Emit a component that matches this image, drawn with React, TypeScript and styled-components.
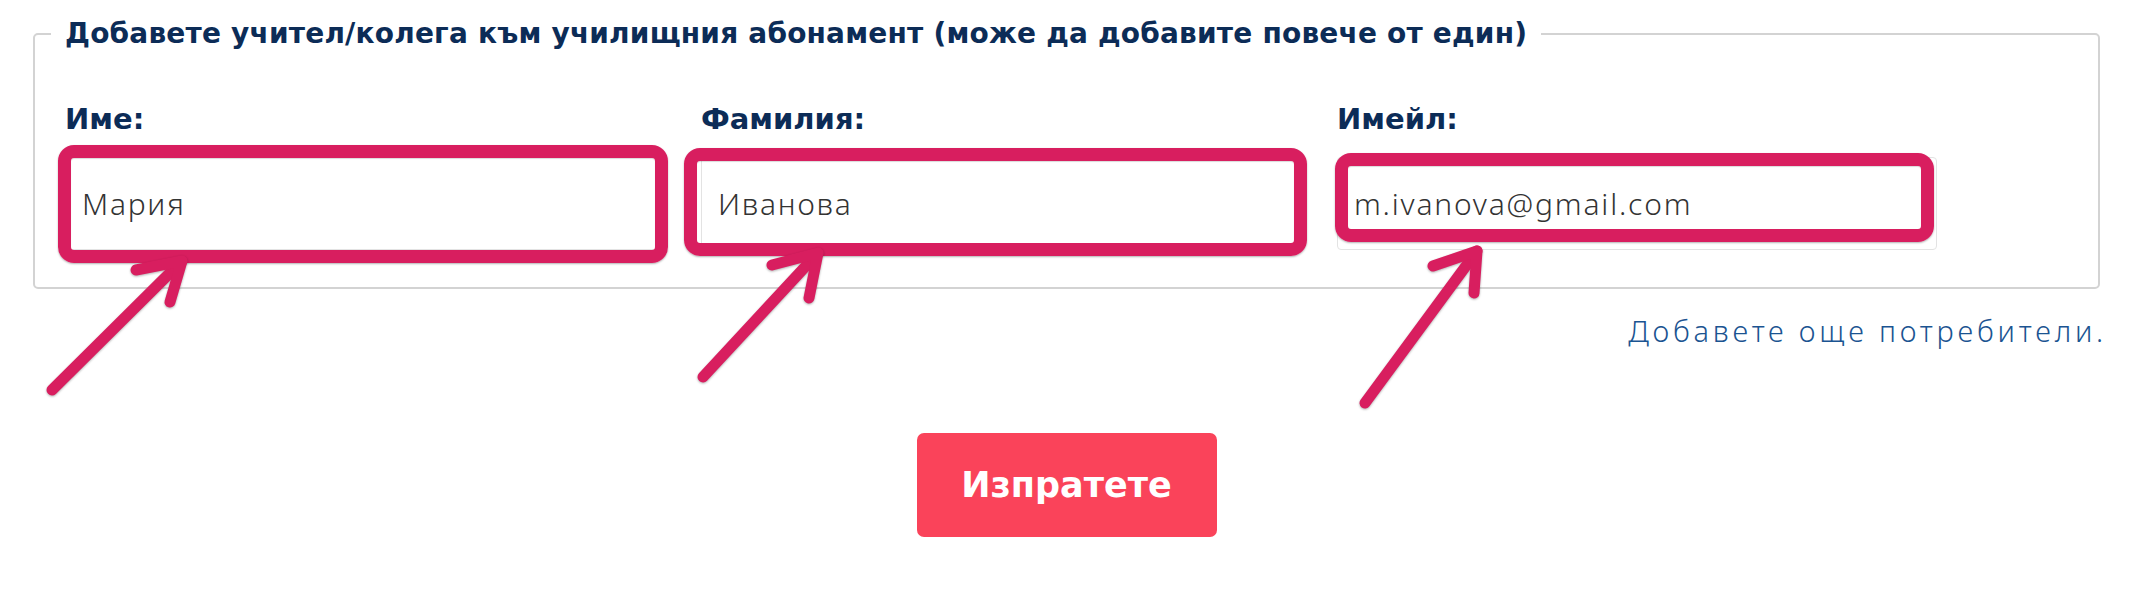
import styled, { createGlobalStyle } from "styled-components";

const GlobalStyle = createGlobalStyle`
  html, body {
    margin: 0;
    padding: 0;
    background: #ffffff;
  }
  body {
    font-family: "Noto Sans", "Open Sans", sans-serif;
  }
`;

type Offsets = { $l: number; $t: number; $r: number; $b: number };

const fields = [
  { label: "Име:", value: "Мария", mark: { $l: -7, $t: -12, $r: -3, $b: -13 } },
  { label: "Фамилия:", value: "Иванова", mark: { $l: -17, $t: -9, $r: -6, $b: -6 } },
  { label: "Имейл:", value: "m.ivanova@gmail.com", mark: { $l: -2, $t: -4, $r: 3, $b: 8 } },
];

// annotation arrows: tail, tip, two barb ends
const arrows = [
  { tail: [52, 390], tip: [182, 261], a: [136, 270], b: [170, 302] },
  { tail: [703, 377], tip: [818, 253], a: [772, 265], b: [809, 298] },
  { tail: [1365, 403], tip: [1477, 251], a: [1433, 266], b: [1474, 293] },
];

const App = () => {
  return (
    <Page lang="bg">
      <GlobalStyle />
      <Container>
        <Fieldset>
          <Legend>Добавете учител/колега към училищния абонамент (може да добавите повече от един)</Legend>
          <Fields>
            {fields.map((f) => (
              <Field key={f.label}>
                <Label>{f.label}</Label>
                <InputWrap>
                  <Input value={f.value} readOnly />
                  <Highlight {...f.mark} />
                </InputWrap>
              </Field>
            ))}
          </Fields>
        </Fieldset>
        <MoreRow>
          <MoreLink href="#">Добавете още потребители.</MoreLink>
        </MoreRow>
        <Actions>
          <Submit type="button">Изпратете</Submit>
        </Actions>
      </Container>
      <Arrows width="2155" height="610" viewBox="0 0 2155 610">
        {arrows.map((a, i) => (
          <g key={i}>
            <line x1={a.tail[0]} y1={a.tail[1]} x2={a.tip[0]} y2={a.tip[1]} />
            <polyline points={`${a.a[0]},${a.a[1]} ${a.tip[0]},${a.tip[1]} ${a.b[0]},${a.b[1]}`} />
          </g>
        ))}
      </Arrows>
    </Page>
  );
};

export default App;

const Page = styled.div`
  position: relative;
  width: 2155px;
  height: 610px;
  overflow: hidden;
  padding-top: 15px;
  box-sizing: border-box;
`;

const Container = styled.div`
  margin: 0 55px 0 33px;
`;

const Fieldset = styled.fieldset`
  margin: 0;
  min-width: 0;
  padding: 0 30px 37px 30px;
  border: 2px solid #d3d3d3;
  border-radius: 5px;
`;

const Legend = styled.legend`
  margin-left: -14px;
  padding: 0 14px;
  font-family: "DejaVu Sans", Verdana, sans-serif;
  font-size: 28px;
  font-weight: 700;
  line-height: 38px;
  letter-spacing: 0.2px;
  color: #0c2c57;
  white-space: nowrap;
`;

const Fields = styled.div`
  display: grid;
  grid-template-columns: repeat(3, 600px);
  column-gap: 36px;
  margin-top: 48px;
`;

const Field = styled.div`
  display: flex;
  flex-direction: column;
  gap: 20px;
`;

const Label = styled.div`
  font-family: "DejaVu Sans", Verdana, sans-serif;
  font-size: 29px;
  font-weight: 700;
  line-height: 36px;
  color: #0c2c57;
`;

const InputWrap = styled.div`
  position: relative;
  height: 93px;
`;

const Input = styled.input`
  box-sizing: border-box;
  width: 100%;
  height: 100%;
  padding: 0 16px;
  border: 1px solid #e3e3e3;
  border-radius: 4px;
  background: #ffffff;
  font-family: "Noto Sans", sans-serif;
  font-size: 30px;
  font-weight: 300;
  letter-spacing: 1.8px;
  color: #333333;
  outline: none;
`;

const Highlight = styled.div<Offsets>`
  position: absolute;
  left: ${(p) => p.$l}px;
  top: ${(p) => p.$t}px;
  right: ${(p) => p.$r}px;
  bottom: ${(p) => p.$b}px;
  border: 13px solid #d81e5f;
  border-radius: 16px;
  box-shadow: 0 1px 2px rgba(0, 0, 0, 0.3), inset 0 1px 1px rgba(0, 0, 0, 0.15);
  pointer-events: none;
`;

const MoreRow = styled.div`
  display: flex;
  justify-content: flex-end;
  margin: 24px -7px 0 0;
`;

const MoreLink = styled.a`
  font-size: 29px;
  font-weight: 300;
  line-height: 36px;
  letter-spacing: 3.8px;
  color: #1b5491;
  text-decoration: none;
`;

const Actions = styled.div`
  display: flex;
  justify-content: center;
  margin-top: 84px;
`;

const Submit = styled.button`
  width: 300px;
  height: 104px;
  border: none;
  border-radius: 7px;
  background: #fa435a;
  color: #ffffff;
  font-family: "DejaVu Sans", Verdana, sans-serif;
  font-size: 35px;
  font-weight: 700;
  cursor: pointer;
`;

const Arrows = styled.svg`
  position: absolute;
  left: 0;
  top: 0;
  pointer-events: none;
  filter: drop-shadow(0 1px 1px rgba(0, 0, 0, 0.3));

  line,
  polyline {
    fill: none;
    stroke: #d81e5f;
    stroke-width: 11;
    stroke-linecap: round;
    stroke-linejoin: round;
  }
`;
